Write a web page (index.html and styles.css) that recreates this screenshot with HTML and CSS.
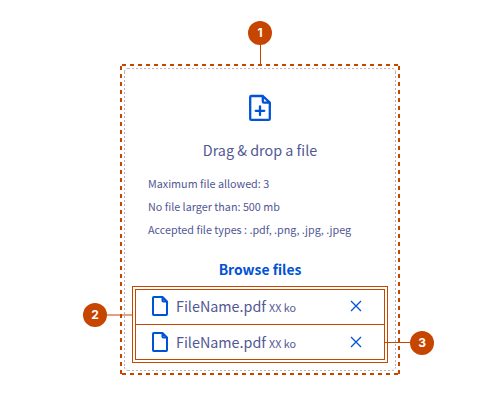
FILE: index.html
```html
<!DOCTYPE html>
<html lang="en">
<head>
<meta charset="utf-8">
<title>File upload anatomy</title>
<link rel="stylesheet" href="styles.css">
</head>
<body>
<main class="anatomy">
  <section class="upload">
    <svg class="outline" width="280" height="311" aria-hidden="true">
      <path class="dash" d="M2 1H279M2 310H279"/>
      <path class="dash" d="M1 2V310M279 2V310"/>
      <path class="dropline" d="M8 4.5H272M8 306.5H272M4.5 8V303M275.5 8V303M4.5 8Q4.5 4.5 8 4.5M272 4.5Q275.5 4.5 275.5 8M4.5 303Q4.5 306.5 8 306.5M272 306.5Q275.5 306.5 275.5 303"/>
    </svg>
    <svg class="add-icon" width="24" height="28" viewBox="0 0 24 28">
      <path d="M14.8 2H3.4C2.7 2 2.2 2.5 2.2 3.2v21.6c0 .6.5 1.1 1.2 1.1h17.2c.7 0 1.2-.5 1.2-1.1V8.6L14.8 2v5.4c0 .7.5 1.2 1.2 1.2h5.8M12 12.5v8.5M7.7 16.8h8.6"/>
    </svg>
    <h1 class="title">Drag &amp; drop a file</h1>
    <ul class="rules">
      <li>Maximum file allowed: 3</li>
      <li>No file larger than: 500 mb</li>
      <li>Accepted file types : .pdf, .png, .jpg, .jpeg</li>
    </ul>
    <div class="browse">Browse files</div>
    <div class="files">
      <ul class="list">
        <li class="file">
          <svg class="doc" width="18" height="22" viewBox="0 0 18 22"><path d="M11.5 2H2.8C2.4 2 2 2.4 2 2.8v16.4c0 .4.4.8.8.8h12.4c.4 0 .8-.4.8-.8V6.5L11.5 2v3.7c0 .4.4.8.8.8H16"/></svg>
          <span class="name">FileName.pdf</span><span class="size">XX ko</span>
          <svg class="close" width="12" height="12" viewBox="0 0 12 12"><path d="M1 1l10 10M11 1L1 11"/></svg>
        </li>
        <li class="file">
          <svg class="doc" width="18" height="22" viewBox="0 0 18 22"><path d="M11.5 2H2.8C2.4 2 2 2.4 2 2.8v16.4c0 .4.4.8.8.8h12.4c.4 0 .8-.4.8-.8V6.5L11.5 2v3.7c0 .4.4.8.8.8H16"/></svg>
          <span class="name">FileName.pdf</span><span class="size">XX ko</span>
          <svg class="close" width="12" height="12" viewBox="0 0 12 12"><path d="M1 1l10 10M11 1L1 11"/></svg>
        </li>
      </ul>
    </div>
  </section>
  <div class="marker marker-1"><span class="badge">1</span><i class="stem"></i></div>
  <div class="marker marker-2"><span class="badge">2</span><svg class="lead" width="25" height="2"><path d="M0 1H25"/></svg></div>
  <div class="marker marker-3"><i class="stem"></i><span class="badge">3</span></div>
</main>
</body>
</html>
```
FILE: styles.css
```css
* { box-sizing: border-box; }
body {
  margin: 0;
  background: #fff;
  color: #515795;
  font-family: "Noto Sans CJK SC", sans-serif;
}
ul { list-style: none; margin: 0; padding: 0; }
svg { display: block; flex: none; fill: none; }
.anatomy {
  position: relative;
  width: 500px;
  height: 400px;
  padding: 64px 100px 0 120px;
}
.upload {
  position: relative;
  width: 280px;
  height: 311px;
  padding: 30px 12px 0;
  display: flex;
  flex-direction: column;
}
.outline { position: absolute; left: 0; top: 0; }
.dash { stroke: #c64600; stroke-width: 2; stroke-dasharray: 4 4; }
.dropline { stroke: #b5b5b5; stroke-width: 1; stroke-dasharray: 2 2; }
.add-icon {
  align-self: center;
  stroke: #0053d6;
  stroke-width: 2.3;
  stroke-linecap: round;
  stroke-linejoin: round;
}
.title {
  margin: 16px 0 0;
  font-size: 14.35px;
  font-weight: 400;
  line-height: 24px;
  text-align: center;
}
.rules {
  margin-top: 10px;
  padding-left: 16px;
  font-size: 10.77px;
  line-height: 23px;
}
.browse {
  margin-top: 16px;
  color: #0053d6;
  font-size: 13.9px;
  font-weight: 700;
  line-height: 24px;
  text-align: center;
}
.files {
  margin-top: 5px;
  padding: 2px;
  border: 1px solid #c64600;
}
.list { border: 1px solid #c64600; }
.file {
  display: flex;
  align-items: center;
  height: 34px;
  padding: 0 22px 2px 15px;
}
.file + .file { height: 35px; padding-bottom: 0; border-top: 1px solid #c64600; }
.doc {
  stroke: #0053d6;
  stroke-width: 2;
  stroke-linejoin: round;
}
.name { margin-left: 7px; font-size: 14.35px; line-height: 24px; }
.size { margin: 4px 0 0 3px; font-size: 10.77px; line-height: 20px; }
.close { margin-left: auto; stroke: #0053d6; stroke-width: 1.3; }
.marker { position: absolute; display: flex; align-items: center; }
.marker-1 { left: 248px; top: 21px; flex-direction: column; }
.marker-2 { left: 83px; top: 302.5px; }
.marker-3 { left: 385px; top: 331px; }
.badge {
  width: 24px;
  height: 24px;
  border-radius: 50%;
  background: #c64600;
  color: #fff;
  font: 700 12px/24px Inter, sans-serif;
  text-align: center;
}
.stem { background: #c64600; }
.marker-1 .stem { width: 1px; height: 19px; margin-left: 1px; }
.marker-3 .stem { width: 25px; height: 1px; margin-top: -1px; }
.lead path { stroke: #c64600; stroke-width: 1; }
```
